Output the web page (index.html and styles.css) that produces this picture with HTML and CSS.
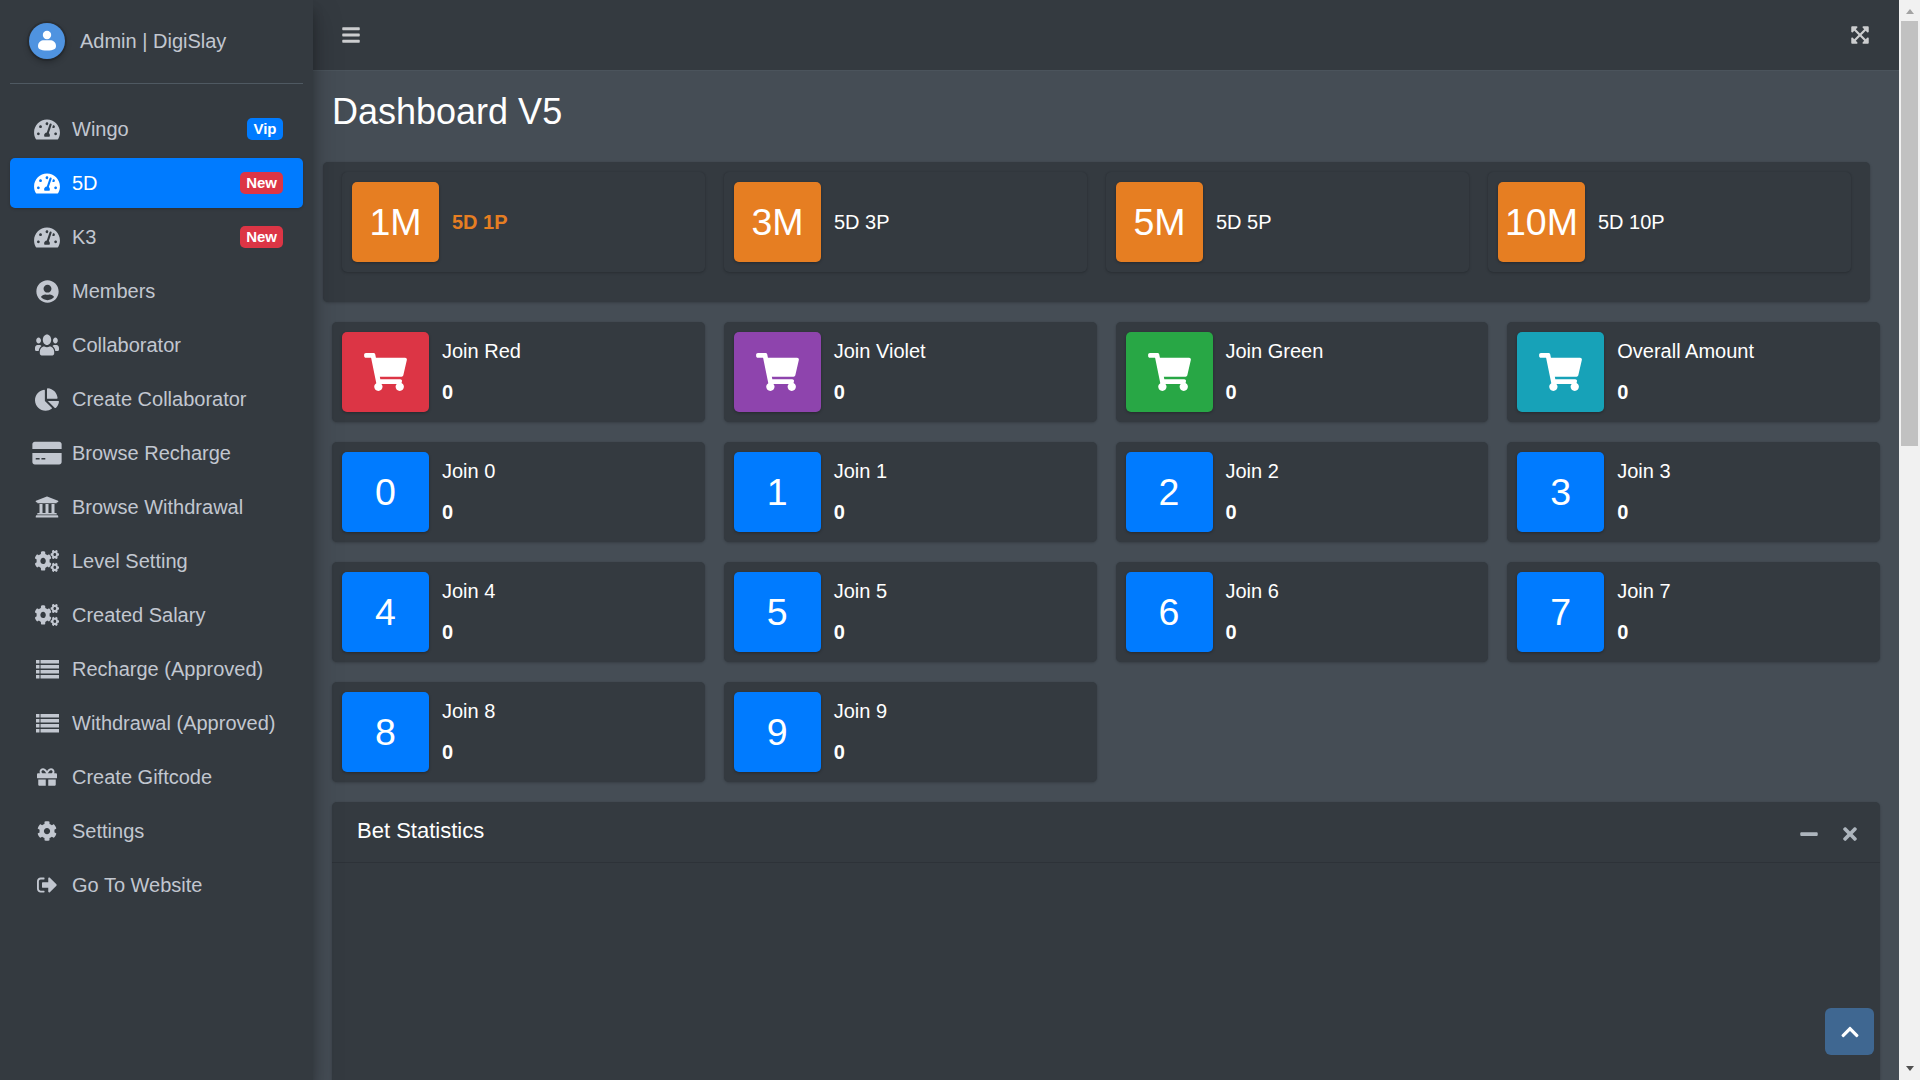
FILE: index.html
```html
<!DOCTYPE html>
<html lang="en">
<head>
    <meta charset="UTF-8">
    <title>Dashboard V5</title>
    <link rel="stylesheet" href="styles.css">
</head>
<body>
    <!-- icon set -->
    <svg class="icon-defs" xmlns="http://www.w3.org/2000/svg">
        <symbol id="i-gauge" viewBox="0 0 576 512"><path d="M288 32C128.94 32 0 160.94 0 320c0 52.8 14.25 102.26 39.06 144.8 5.61 9.62 16.3 15.2 27.44 15.2h443c11.14 0 21.83-5.58 27.44-15.2C561.75 422.26 576 372.8 576 320c0-159.06-128.94-288-288-288zm0 64c14.71 0 26.58 10.13 30.32 23.65-1.11 2.26-2.64 4.23-3.45 6.67l-9.22 27.67c-5.13 3.49-10.97 6.01-17.64 6.01-17.67 0-32-14.33-32-32S270.33 96 288 96zM96 384c-17.67 0-32-14.33-32-32s14.33-32 32-32 32 14.33 32 32-14.33 32-32 32zm48-160c-17.67 0-32-14.33-32-32s14.33-32 32-32 32 14.33 32 32-14.33 32-32 32zm246.77-72.41l-61.33 184C343.13 347.33 352 364.54 352 384c0 11.72-3.38 22.55-8.88 32H232.88c-5.5-9.45-8.88-20.28-8.88-32 0-33.94 26.5-61.43 59.9-63.59l61.34-184.01c4.17-12.56 17.73-19.45 30.36-15.17 12.57 4.19 19.35 17.79 15.17 30.36zm14.66 57.2l15.52-46.55c3.47-1.29 7.13-2.23 11.05-2.23 17.67 0 32 14.33 32 32s-14.33 32-32 32c-11.38-.01-20.89-6.28-26.57-15.22zM480 384c-17.67 0-32-14.33-32-32s14.33-32 32-32 32 14.33 32 32-14.33 32-32 32z"/></symbol>
        <symbol id="i-user-circle" viewBox="0 0 496 512"><path d="M248 8C111 8 0 119 0 256s111 248 248 248 248-111 248-248S385 8 248 8zm0 96c48.6 0 88 39.4 88 88s-39.4 88-88 88-88-39.4-88-88 39.4-88 88-88zm0 344c-58.7 0-111.3-26.6-146.5-68.2 18.8-35.4 55.6-59.8 98.5-59.8 2.4 0 4.8.4 7.1 1.1 13 4.2 26.6 6.9 40.9 6.9 14.3 0 28-2.7 40.9-6.9 2.3-.7 4.7-1.1 7.1-1.1 42.9 0 79.7 24.4 98.5 59.8C359.3 421.4 306.7 448 248 448z"/></symbol>
        <symbol id="i-users" viewBox="0 20 640 470" preserveAspectRatio="none"><path d="M96 224c35.3 0 64-28.7 64-64s-28.7-64-64-64-64 28.7-64 64 28.7 64 64 64zm448 0c35.3 0 64-28.7 64-64s-28.7-64-64-64-64 28.7-64 64 28.7 64 64 64zm32 32h-64c-17.6 0-33.5 7.1-45.1 18.6 40.3 22.1 68.9 62 75.1 109.4h66c17.7 0 32-14.3 32-32v-32c0-35.3-28.7-64-64-64zm-256 0c61.9 0 112-50.1 112-112S381.9 32 320 32 208 82.1 208 144s50.1 112 112 112zm76.8 32h-8.3c-20.8 10-43.9 16-68.5 16s-47.6-6-68.5-16h-8.3C179.6 288 128 339.6 128 403.2V432c0 26.5 21.5 48 48 48h288c26.5 0 48-21.5 48-48v-28.8c0-63.6-51.6-115.2-115.2-115.2zm-223.7-13.4C161.5 263.1 145.6 256 128 256H64c-35.3 0-64 28.7-64 64v32c0 17.7 14.3 32 32 32h65.9c6.3-47.4 34.9-87.3 75.2-109.4z"/></symbol>
        <symbol id="i-pie" viewBox="0 0 544 512"><path d="M527.79 288H290.5l158.03 158.03c6.04 6.04 15.98 6.53 22.19.68 38.7-36.46 65.32-85.61 73.13-140.86 1.34-9.46-6.51-17.85-16.06-17.85zm-15.83-64.8C503.72 103.74 408.26 8.28 288.8.04 279.68-.59 272 7.1 272 16.24V240h223.77c9.14 0 16.82-7.68 16.19-16.8zM224 288V50.71c0-9.55-8.39-17.4-17.84-16.06C86.99 51.49-4.1 155.6.14 280.37 4.5 408.51 114.83 513.59 243.03 511.98c50.4-.63 96.97-16.87 135.26-44.03 7.9-5.6 8.42-17.23 1.57-24.08L224 288z"/></symbol>
        <symbol id="i-card" viewBox="0 0 576 512"><path d="M0 432c0 26.5 21.5 48 48 48h480c26.5 0 48-21.5 48-48V256H0v176zm64-68c0-6.6 5.4-12 12-12h60c6.6 0 8 5.4 8 12v10c0 6.6-1.4 12-8 12H76c-6.6 0-12-5.4-12-12v-10zm112 0c0-6.6 5.4-12 12-12h60c6.6 0 8 5.4 8 12v10c0 6.6-1.4 12-8 12h-60c-6.6 0-12-5.4-12-12v-10zM576 80v96H0V80c0-26.5 21.5-48 48-48h480c26.5 0 48 21.5 48 48z"/></symbol>
        <symbol id="i-bank" viewBox="0 0 512 512"><path d="M496 128v16a8 8 0 0 1-8 8h-24v12c0 6.627-5.373 12-12 12H60c-6.627 0-12-5.373-12-12v-12H24a8 8 0 0 1-8-8v-16a8 8 0 0 1 4.941-7.392l232-88a7.996 7.996 0 0 1 6.118 0l232 88A8 8 0 0 1 496 128zm-24 304H40c-13.255 0-24 10.745-24 24v16a8 8 0 0 0 8 8h464a8 8 0 0 0 8-8v-16c0-13.255-10.745-24-24-24zM96 192v192H60c-6.627 0-12 5.373-12 12v20h416v-20c0-6.627-5.373-12-12-12h-36V192h-64v192h-64V192h-64v192h-64V192H96z"/></symbol>
        <symbol id="i-cogs" viewBox="0 0 640 512" preserveAspectRatio="none"><path d="M512.1 191l-8.2 14.3c-3 5.3-9.4 7.5-15.1 5.4-11.8-4.4-22.6-10.7-32.1-18.6-4.6-3.8-5.8-10.5-2.8-15.7l8.2-14.3c-6.9-8-12.3-17.3-15.9-27.4h-16.5c-6 0-11.2-4.3-12.2-10.3-2-12-2.1-24.6 0-37.1 1-6 6.2-10.4 12.2-10.4h16.5c3.6-10.1 9-19.4 15.9-27.4l-8.2-14.3c-3-5.2-1.9-11.9 2.8-15.7 9.5-7.9 20.4-14.2 32.1-18.6 5.7-2.1 12.1.1 15.1 5.4l8.2 14.3c10.5-1.9 21.2-1.9 31.7 0L552 6.3c3-5.3 9.4-7.5 15.1-5.4 11.8 4.4 22.6 10.7 32.1 18.6 4.6 3.8 5.8 10.5 2.8 15.7l-8.2 14.3c6.9 8 12.3 17.3 15.9 27.4h16.5c6 0 11.2 4.3 12.2 10.3 2 12 2.1 24.6 0 37.1-1 6-6.2 10.4-12.2 10.4h-16.5c-3.6 10.1-9 19.4-15.9 27.4l8.2 14.3c3 5.2 1.9 11.9-2.8 15.7-9.5 7.9-20.4 14.2-32.1 18.6-5.7 2.1-12.1-.1-15.1-5.4l-8.2-14.3c-10.4 1.9-21.2 1.9-31.7 0zm-10.5-58.8c38.5 29.6 82.4-14.3 52.8-52.8-38.5-29.7-82.4 14.3-52.8 52.8zM386.3 286.1l33.7 16.8c10.1 5.8 14.5 18.1 10.5 29.1-8.9 24.2-26.4 46.4-42.6 65.8-7.4 8.9-20.2 11.1-30.3 5.3l-29.1-16.8c-16 13.7-34.6 24.6-54.9 31.7v33.6c0 11.6-8.3 21.6-19.7 23.6-24.6 4.2-50.4 4.4-75.9 0-11.5-2-20-11.9-20-23.6V418c-20.3-7.2-38.9-18-54.9-31.7L74 403c-10 5.8-22.9 3.6-30.3-5.3-16.2-19.4-33.3-41.6-42.2-65.7-4-10.9.4-23.2 10.5-29.1l33.3-16.8c-3.9-20.9-3.9-42.4 0-63.4L12 205.8c-10.1-5.8-14.6-18.1-10.5-29 8.9-24.2 26-46.4 42.2-65.8 7.4-8.9 20.2-11.1 30.3-5.3l29.1 16.8c16-13.7 34.6-24.6 54.9-31.7V57.1c0-11.5 8.2-21.5 19.6-23.5 24.6-4.2 50.5-4.4 76-.1 11.5 2 20 11.9 20 23.6v33.6c20.3 7.2 38.9 18 54.9 31.7l29.1-16.8c10-5.8 22.9-3.6 30.3 5.3 16.2 19.4 33.2 41.6 42.1 65.8 4 10.9.1 23.2-10 29.1l-33.7 16.8c3.9 21 3.9 42.5 0 63.5zm-117.6 21.1c59.2-77-28.7-164.9-105.7-105.7-59.2 77 28.7 164.9 105.7 105.7zm243.4 182.7l-8.2 14.3c-3 5.3-9.4 7.5-15.1 5.4-11.8-4.4-22.6-10.7-32.1-18.6-4.6-3.8-5.8-10.5-2.8-15.7l8.2-14.3c-6.9-8-12.3-17.3-15.9-27.4h-16.5c-6 0-11.2-4.3-12.2-10.3-2-12-2.1-24.6 0-37.1 1-6 6.2-10.4 12.2-10.4h16.5c3.6-10.1 9-19.4 15.9-27.4l-8.2-14.3c-3-5.2-1.9-11.9 2.8-15.7 9.5-7.9 20.4-14.2 32.1-18.6 5.7-2.1 12.1.1 15.1 5.4l8.2 14.3c10.5-1.9 21.2-1.9 31.7 0l8.2-14.3c3-5.3 9.4-7.5 15.1-5.4 11.8 4.4 22.6 10.7 32.1 18.6 4.6 3.8 5.8 10.5 2.8 15.7l-8.2 14.3c6.9 8 12.3 17.3 15.9 27.4h16.5c6 0 11.2 4.3 12.2 10.3 2 12 2.1 24.6 0 37.1-1 6-6.2 10.4-12.2 10.4h-16.5c-3.6 10.1-9 19.4-15.9 27.4l8.2 14.3c3 5.2 1.9 11.9-2.8 15.7-9.5 7.9-20.4 14.2-32.1 18.6-5.7 2.1-12.1-.1-15.1-5.4l-8.2-14.3c-10.4 1.9-21.2 1.9-31.7 0zM501.6 431c38.5 29.6 82.4-14.3 52.8-52.8-38.5-29.6-82.4 14.3-52.8 52.8z"/></symbol>
        <symbol id="i-list" viewBox="0 0 23 19"><path d="M0 0h3.5v3.6H0zM4.500 0H23v3.6H4.500zM0 5h3.500v3.600H0zM4.500 5H23v3.600H4.500zM0 10h3.500v3.600H0zM4.500 10H23v3.600H4.500zM0 15h3.500v3.600H0zM4.500 15H23v3.600H4.500z"/></symbol>
        <symbol id="i-gift" viewBox="0 0 512 512"><path d="M32 448c0 17.7 14.3 32 32 32h160V320H32v128zm256 32h160c17.7 0 32-14.3 32-32V320H288v160zm192-320h-42.1c6.2-12.1 10.1-25.5 10.100-40 0-48.500-39.500-88-88-88-41.600 0-68.500 21.300-103 68.300-34.500-47-61.400-68.300-103-68.300-48.500 0-88 39.500-88 88 0 14.500 3.800 27.900 10.100 40H32c-17.700 0-32 14.300-32 32v80c0 8.800 7.200 16 16 16h480c8.800 0 16-7.200 16-16v-80c0-17.700-14.300-32-32-32zm-326.100 0c-22.100 0-40-17.900-40-40s17.900-40 40-40c19.900 0 34.600 3.300 86.100 80h-86.100zm206.100 0h-86.100c51.400-76.500 65.700-80 86.100-80 22.100 0 40 17.900 40 40s-17.900 40-40 40z"/></symbol>
        <symbol id="i-cog" viewBox="0 0 512 512"><path d="M487.4 315.700l-42.600-24.600c4.300-23.200 4.300-47 0-70.200l42.600-24.600c4.900-2.800 7.100-8.600 5.500-14-11.100-35.600-30-67.800-54.700-94.600-3.800-4.100-10-5.100-14.800-2.300L380.800 110c-17.900-15.400-38.500-27.300-60.800-35.100V25.800c0-5.600-3.900-10.500-9.400-11.700-36.700-8.200-74.300-7.800-109.200 0-5.500 1.200-9.400 6.100-9.400 11.700V75c-22.200 7.900-42.800 19.800-60.800 35.100L88.700 85.500c-4.900-2.800-11-1.900-14.800 2.300-24.700 26.700-43.600 58.900-54.700 94.600-1.700 5.400.6 11.200 5.500 14L67.300 221c-4.300 23.200-4.300 47 0 70.200l-42.600 24.600c-4.900 2.800-7.100 8.600-5.500 14 11.100 35.600 30 67.800 54.700 94.600 3.800 4.100 10 5.100 14.800 2.300l42.600-24.600c17.900 15.400 38.500 27.300 60.800 35.100v49.200c0 5.600 3.900 10.500 9.400 11.700 36.700 8.200 74.300 7.800 109.200 0 5.500-1.200 9.400-6.100 9.400-11.700v-49.200c22.200-7.900 42.800-19.800 60.800-35.100l42.600 24.600c4.900 2.800 11 1.900 14.800-2.300 24.700-26.700 43.600-58.900 54.700-94.600 1.500-5.500-.7-11.300-5.600-14.100zM256 336c-44.100 0-80-35.900-80-80s35.900-80 80-80 80 35.900 80 80-35.900 80-80 80z"/></symbol>
        <symbol id="i-signout" viewBox="0 0 512 512"><path d="M497 273L329 441c-15 15-41 4.500-41-17v-96H152c-13.300 0-24-10.700-24-24v-96c0-13.300 10.700-24 24-24h136V88c0-21.400 25.900-32 41-17l168 168c9.300 9.400 9.300 24.600 0 34zM192 436v-24c0-6.600-5.400-12-12-12H96c-26 0-48-22-48-48V160c0-26 22-48 48-48h84c6.600 0 12-5.400 12-12V76c0-6.600-5.400-12-12-12H96c-53 0-96 43-96 96v192c0 53 43 96 96 96h84c6.600 0 12-5.400 12-12z"/></symbol>
        <symbol id="i-cart" viewBox="0 0 576 512"><path d="M528.12 301.319l47.273-208C578.806 78.301 567.391 64 551.99 64H159.208l-9.166-44.81C147.758 8.021 137.93 0 126.529 0H24C10.745 0 0 10.745 0 24v16c0 13.255 10.745 24 24 24h69.883l70.248 343.435C147.325 417.1 136 435.222 136 456c0 30.928 25.072 56 56 56s56-25.072 56-56c0-15.674-6.447-29.835-16.824-40h209.647C430.447 426.165 424 440.326 424 456c0 30.928 25.072 56 56 56s56-25.072 56-56c0-22.172-12.888-41.332-31.579-50.405l5.517-24.276c3.413-15.018-8.002-29.319-23.403-29.319H218.117l-6.545-32h293.145c11.206 0 20.92-7.754 23.403-18.681z"/></symbol>
        <symbol id="i-bars" viewBox="0 0 448 512"><path d="M16 132h416c8.837 0 16-7.163 16-16V76c0-8.837-7.163-16-16-16H16C7.163 60 0 67.163 0 76v40c0 8.837 7.163 16 16 16zm0 160h416c8.837 0 16-7.163 16-16v-40c0-8.837-7.163-16-16-16H16c-8.837 0-16 7.163-16 16v40c0 8.837 7.163 16 16 16zm0 160h416c8.837 0 16-7.163 16-16v-40c0-8.837-7.163-16-16-16H16c-8.837 0-16 7.163-16 16v40c0 8.837 7.163 16 16 16z"/></symbol>
        <symbol id="i-expand" viewBox="0 0 448 512"><path d="M448 344v112a23.940 23.940 0 0 1-24 24H312c-21.390 0-32.090-25.900-17-41l36.200-36.200L224 295.600 116.770 402.900 153 439c15.090 15.100 4.390 41-17 41H24a23.940 23.940 0 0 1-24-24V344c0-21.400 25.890-32.100 41-17l36.190 36.200L184.460 256 77.180 148.700 41 185c-15.100 15.100-41 4.400-41-17V56a23.940 23.940 0 0 1 24-24h112c21.390 0 32.090 25.900 17 41l-36.200 36.200L224 216.400l107.230-107.300L295 73c-15.090-15.100-4.390-41 17-41h112a23.940 23.940 0 0 1 24 24v112c0 21.400-25.890 32.100-41 17l-36.190-36.200L263.540 256l107.280 107.300L407 327.100c15.100-15.200 41-4.500 41 16.900z"/></symbol>
        <symbol id="i-minus" viewBox="0 0 448 512"><path d="M416 208H32c-17.670 0-32 14.330-32 32v32c0 17.670 14.330 32 32 32h384c17.670 0 32-14.330 32-32v-32c0-17.670-14.330-32-32-32z"/></symbol>
        <symbol id="i-times" viewBox="0 0 352 512"><path d="M242.720 256l100.070-100.070c12.280-12.280 12.280-32.190 0-44.480l-22.240-22.240c-12.280-12.280-32.190-12.280-44.480 0L176 189.280 75.930 89.210c-12.280-12.280-32.190-12.280-44.480 0L9.210 111.450c-12.280 12.280-12.280 32.190 0 44.480L109.280 256 9.210 356.070c-12.280 12.280-12.280 32.190 0 44.480l22.240 22.240c12.280 12.280 32.200 12.280 44.480 0L176 322.720l100.070 100.070c12.280 12.280 32.200 12.280 44.480 0l22.240-22.240c12.280-12.280 12.280-32.190 0-44.480L242.720 256z"/></symbol>
        <symbol id="i-chevron" viewBox="0 0 448 512"><path d="M240.971 130.524l194.343 194.343c9.373 9.373 9.373 24.569 0 33.941l-22.667 22.667c-9.357 9.357-24.522 9.375-33.901.04L224 227.495 69.255 381.516c-9.379 9.335-24.544 9.317-33.901-.04l-22.667-22.667c-9.373-9.373-9.373-24.569 0-33.941L207.030 130.525c9.372-9.373 24.568-9.373 33.941-.001z"/></symbol>
    </svg>

    <div class="wrapper">
        <!-- sidebar -->
        <aside class="sidebar">
            <div class="user-panel">
                <div class="avatar">
                    <svg class="avatar-man" viewBox="0 0 36 36">
                        <circle cx="18" cy="12" r="4.200"/>
                        <path d="M9 23c0-4 3-5.800 6-5.800h6c3 0 6 1.800 6 5.800 0 2.800-2 4.500-9 4.500s-9-1.700-9-4.500z"/>
                    </svg>
                </div>
                <span class="user-name">Admin | DigiSlay</span>
            </div>
            <nav class="nav">
                <a class="nav-link"><span class="nav-icon"><svg class="ic-gauge"><use href="#i-gauge"/></svg></span>Wingo<span class="badge badge-blue">Vip</span></a>
                <a class="nav-link active"><span class="nav-icon"><svg class="ic-gauge"><use href="#i-gauge"/></svg></span>5D<span class="badge badge-red">New</span></a>
                <a class="nav-link"><span class="nav-icon"><svg class="ic-gauge"><use href="#i-gauge"/></svg></span>K3<span class="badge badge-red">New</span></a>
                <a class="nav-link"><span class="nav-icon"><svg class="ic-round"><use href="#i-user-circle"/></svg></span>Members</a>
                <a class="nav-link"><span class="nav-icon"><svg class="ic-users"><use href="#i-users"/></svg></span>Collaborator</a>
                <a class="nav-link"><span class="nav-icon"><svg class="ic-pie"><use href="#i-pie"/></svg></span>Create Collaborator</a>
                <a class="nav-link"><span class="nav-icon"><svg class="ic-card"><use href="#i-card"/></svg></span>Browse Recharge</a>
                <a class="nav-link"><span class="nav-icon"><svg class="ic-bank"><use href="#i-bank"/></svg></span>Browse Withdrawal</a>
                <a class="nav-link"><span class="nav-icon"><svg class="ic-cogs"><use href="#i-cogs"/></svg></span>Level Setting</a>
                <a class="nav-link"><span class="nav-icon"><svg class="ic-cogs"><use href="#i-cogs"/></svg></span>Created Salary</a>
                <a class="nav-link"><span class="nav-icon"><svg class="ic-list"><use href="#i-list"/></svg></span>Recharge (Approved)</a>
                <a class="nav-link"><span class="nav-icon"><svg class="ic-list"><use href="#i-list"/></svg></span>Withdrawal (Approved)</a>
                <a class="nav-link"><span class="nav-icon"><svg class="ic-small"><use href="#i-gift"/></svg></span>Create Giftcode</a>
                <a class="nav-link"><span class="nav-icon"><svg class="ic-small"><use href="#i-cog"/></svg></span>Settings</a>
                <a class="nav-link"><span class="nav-icon"><svg class="ic-small"><use href="#i-signout"/></svg></span>Go To Website</a>
            </nav>
        </aside>

        <div class="main">
            <header class="topbar">
                <svg class="top-icon"><use href="#i-bars"/></svg>
                <svg class="top-icon"><use href="#i-expand"/></svg>
            </header>

            <section class="content">
                <h1 class="page-title">Dashboard V5</h1>

                <!-- game selector -->
                <div class="mode-panel">
                    <div class="info-box">
                        <span class="box-icon bg-orange">1M</span>
                        <span class="mode-name current">5D 1P</span>
                    </div>
                    <div class="info-box">
                        <span class="box-icon bg-orange">3M</span>
                        <span class="mode-name">5D 3P</span>
                    </div>
                    <div class="info-box">
                        <span class="box-icon bg-orange">5M</span>
                        <span class="mode-name">5D 5P</span>
                    </div>
                    <div class="info-box">
                        <span class="box-icon bg-orange">10M</span>
                        <span class="mode-name">5D 10P</span>
                    </div>
                </div>

                <!-- totals -->
                <div class="stat-grid">
                    <div class="info-box">
                        <span class="box-icon bg-red"><svg class="cart"><use href="#i-cart"/></svg></span>
                        <div class="box-text"><span>Join Red</span><b>0</b></div>
                    </div>
                    <div class="info-box">
                        <span class="box-icon bg-violet"><svg class="cart"><use href="#i-cart"/></svg></span>
                        <div class="box-text"><span>Join Violet</span><b>0</b></div>
                    </div>
                    <div class="info-box">
                        <span class="box-icon bg-green"><svg class="cart"><use href="#i-cart"/></svg></span>
                        <div class="box-text"><span>Join Green</span><b>0</b></div>
                    </div>
                    <div class="info-box">
                        <span class="box-icon bg-teal"><svg class="cart"><use href="#i-cart"/></svg></span>
                        <div class="box-text"><span>Overall Amount</span><b>0</b></div>
                    </div>
                    <div class="info-box">
                        <span class="box-icon bg-blue">0</span>
                        <div class="box-text"><span>Join 0</span><b>0</b></div>
                    </div>
                    <div class="info-box">
                        <span class="box-icon bg-blue">1</span>
                        <div class="box-text"><span>Join 1</span><b>0</b></div>
                    </div>
                    <div class="info-box">
                        <span class="box-icon bg-blue">2</span>
                        <div class="box-text"><span>Join 2</span><b>0</b></div>
                    </div>
                    <div class="info-box">
                        <span class="box-icon bg-blue">3</span>
                        <div class="box-text"><span>Join 3</span><b>0</b></div>
                    </div>
                    <div class="info-box">
                        <span class="box-icon bg-blue">4</span>
                        <div class="box-text"><span>Join 4</span><b>0</b></div>
                    </div>
                    <div class="info-box">
                        <span class="box-icon bg-blue">5</span>
                        <div class="box-text"><span>Join 5</span><b>0</b></div>
                    </div>
                    <div class="info-box">
                        <span class="box-icon bg-blue">6</span>
                        <div class="box-text"><span>Join 6</span><b>0</b></div>
                    </div>
                    <div class="info-box">
                        <span class="box-icon bg-blue">7</span>
                        <div class="box-text"><span>Join 7</span><b>0</b></div>
                    </div>
                    <div class="info-box">
                        <span class="box-icon bg-blue">8</span>
                        <div class="box-text"><span>Join 8</span><b>0</b></div>
                    </div>
                    <div class="info-box">
                        <span class="box-icon bg-blue">9</span>
                        <div class="box-text"><span>Join 9</span><b>0</b></div>
                    </div>
                </div>

                <div class="card">
                    <div class="card-header">
                        <h3 class="card-title">Bet Statistics</h3>
                        <svg class="tool-minus"><use href="#i-minus"/></svg>
                        <svg class="tool-times"><use href="#i-times"/></svg>
                    </div>
                </div>
            </section>

            <a class="back-top"><svg class="top-icon"><use href="#i-chevron"/></svg></a>
        </div>

        <!-- page scrollbar -->
        <div class="scrollbar">
            <span class="arrow-up"></span>
            <div class="thumb"></div>
            <span class="arrow-down"></span>
        </div>
    </div>
</body>
</html>
```

FILE: styles.css
```css
html, body {
    height: 100%;
    margin: 0;
    overflow: hidden;
}

body {
    font-family: "Liberation Sans", Arial, sans-serif;
    font-size: 20px;
    line-height: 30px;
    color: #fff;
    background: #454d55;
}

.icon-defs {
    display: none;
}

svg {
    fill: currentColor;
    display: block;
}

.wrapper {
    display: flex;
    height: 100vh;
}

/* sidebar */
.sidebar {
    width: 313px;
    flex-shrink: 0;
    background: #343a40;
    position: relative;
    z-index: 2;
    box-shadow: 0 14px 28px rgba(0,0,0,0.25), 0 10px 10px rgba(0,0,0,0.22);
    color: #c2c7d0;
}

.user-panel {
    display: flex;
    align-items: center;
    gap: 15px;
    height: 81px;
    padding-bottom: 2px;
    margin: 0 10px;
    padding-left: 19px;
    border-bottom: 1px solid #4f5962;
}

.avatar {
    width: 36px;
    height: 36px;
    border-radius: 50%;
    background: #4f93e0;
    box-shadow: 0 3px 6px rgba(0,0,0,0.3), 0 0 0 2px rgba(0,0,0,0.12);
}

.avatar-man {
    width: 36px;
    height: 36px;
    fill: #fff;
}

.nav {
    display: flex;
    flex-direction: column;
    gap: 4px;
    margin: 20px 10px 0;
}

.nav-link {
    display: flex;
    align-items: center;
    height: 50px;
    padding: 0 20px;
    border-radius: 5px;
}

.nav-link.active {
    background: #007bff;
    color: #fff;
    box-shadow: 0 1px 3px rgba(0,0,0,0.2);
}

.nav-icon {
    display: flex;
    justify-content: center;
    width: 34px;
    margin-right: 8px;
    margin-left: 0;
}

.ic-gauge { width: 26px; height: 23px; }
.ic-round { width: 23px; height: 23px; }
.ic-pie { width: 24px; height: 23px; }
.ic-users { width: 24px; height: 22px; }
.ic-cogs { width: 24px; height: 22px; }
.ic-card { width: 30px; height: 26px; }
.ic-bank { width: 24px; height: 24px; }
.ic-list { width: 23px; height: 19px; }
.ic-small { width: 20px; height: 20px; }

.badge {
    margin-left: auto;
    height: 22px;
    padding: 0 6px;
    border-radius: 5px;
    font-size: 15px;
    font-weight: bold;
    line-height: 22px;
    color: #fff;
}

.badge-blue { background: #007bff; padding: 0 6.5px; }
.badge-red { background: #dc3545; }

/* top bar */
.main {
    flex: 1;
    min-width: 0;
    position: relative;
    overflow: hidden;
}

.topbar {
    display: flex;
    justify-content: space-between;
    align-items: center;
    height: 70px;
    padding: 0 30px 0 29px;
    background: #343a40;
    border-bottom: 1px solid #4b545c;
    color: rgba(255,255,255,0.75);
}

.top-icon {
    width: 18px;
    height: 20px;
}

/* content */
.content {
    padding: 19px 19px 0 19px;
}

.page-title {
    margin: 0 0 29px 0;
    font-size: 36px;
    font-weight: normal;
    line-height: 43px;
}

.mode-panel {
    display: grid;
    grid-template-columns: repeat(4, 1fr);
    gap: 19px;
    margin: 0 10px 20px -9px;
    padding: 10px 19px 30px;
    background: #343a40;
    border-radius: 5px;
    box-shadow: 0 0 1px rgba(0,0,0,0.125), 0 1px 3px rgba(0,0,0,0.2);
}

.stat-grid {
    display: grid;
    grid-template-columns: repeat(4, 1fr);
    gap: 20px 19px;
    margin-bottom: 20px;
}

.info-box {
    display: flex;
    align-items: center;
    height: 100px;
    padding: 10px;
    box-sizing: border-box;
    background: #343a40;
    border-radius: 5px;
    box-shadow: 0 0 1px rgba(0,0,0,0.125), 0 1px 3px rgba(0,0,0,0.2);
}

.box-icon {
    display: flex;
    align-items: center;
    justify-content: center;
    width: 87px;
    height: 80px;
    flex-shrink: 0;
    border-radius: 5px;
    font-size: 37.5px;
    box-shadow: 0 1px 3px rgba(0,0,0,0.3);
}

.bg-orange { background: #e67e22; }
.bg-red { background: #dc3545; }
.bg-violet { background: #8e44ad; }
.bg-green { background: #28a745; }
.bg-teal { background: #17a2b8; }
.bg-blue { background: #007bff; }

.cart {
    width: 43px;
    height: 38px;
}

.mode-name {
    padding-left: 13px;
}

.mode-name.current {
    color: #e67e22;
    font-weight: bold;
}

.box-text {
    display: flex;
    flex-direction: column;
    gap: 5px;
    padding-left: 13px;
    margin-top: -2px;
    line-height: 36px;
}

.card {
    height: 400px;
    background: #343a40;
    border-radius: 5px;
    box-shadow: 0 0 1px rgba(0,0,0,0.125), 0 1px 3px rgba(0,0,0,0.2);
}

.card-header {
    display: flex;
    align-items: center;
    height: 60px;
    padding: 0 23px 0 25px;
    border-bottom: 1px solid rgba(0,0,0,0.125);
    color: #adb5bd;
}

.card-title {
    margin: -2px auto 0 0;
    font-size: 22px;
    font-weight: normal;
    color: #fff;
}

.tool-minus {
    width: 18px;
    height: 20px;
    margin-right: 25px;
    margin-top: 3px;
}

.tool-times {
    width: 14px;
    height: 20px;
    margin-top: 3px;
}

.back-top {
    position: absolute;
    right: 25px;
    bottom: 25px;
    display: flex;
    align-items: center;
    justify-content: center;
    width: 49px;
    height: 47px;
    border-radius: 6px;
    background: #3f6791;
    color: #fff;
}

/* fake scrollbar, the screenshot window has one */
.scrollbar {
    width: 21px;
    flex-shrink: 0;
    display: flex;
    flex-direction: column;
    align-items: center;
    background: #f1f1f1;
    position: relative;
}

.arrow-up {
    width: 0;
    height: 0;
    margin-top: 9px;
    border-left: 4.5px solid transparent;
    border-right: 4.5px solid transparent;
    border-bottom: 5px solid #a3a3a3;
}

.thumb {
    width: 17px;
    height: 425px;
    margin-top: 7px;
    background: #c1c1c1;
}

.arrow-down {
    width: 0;
    height: 0;
    margin-top: auto;
    margin-bottom: 9px;
    border-left: 4.5px solid transparent;
    border-right: 4.5px solid transparent;
    border-top: 5px solid #505050;
}
```
